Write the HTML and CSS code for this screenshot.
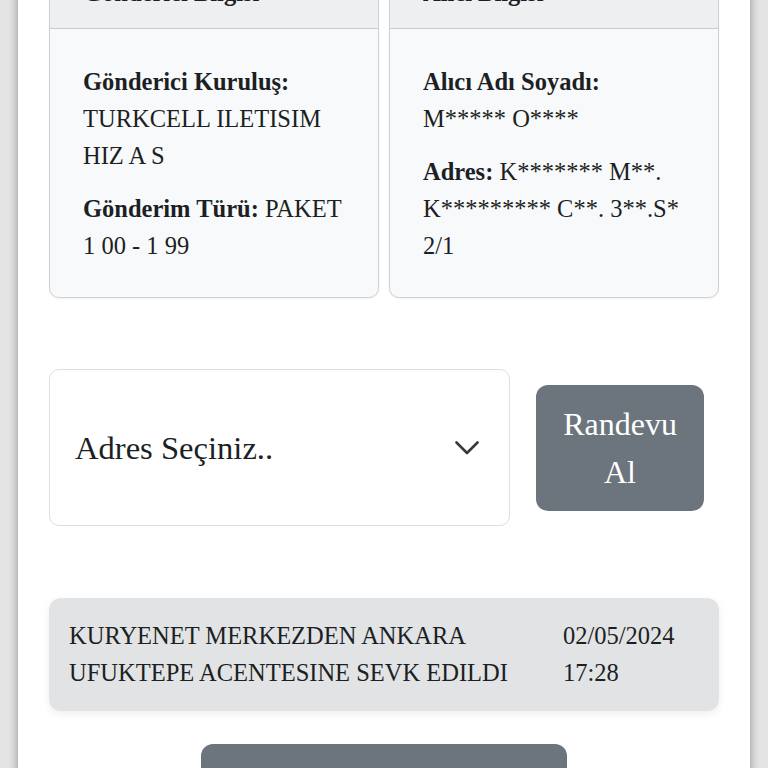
FILE: index.html
```html
<!DOCTYPE html>
<html lang="tr">
<head>
<meta charset="utf-8">
<title>Gönderi Takip</title>
<link rel="stylesheet" href="styles.css">
</head>
<body>
<main class="page">
  <section class="cards">
    <article class="card">
      <header class="card-header">Gönderici Bilgisi</header>
      <div class="card-body">
        <p><b>Gönderici Kuruluş:</b><br>TURKCELL ILETISIM HIZ A S</p>
        <p><b>Gönderim Türü:</b> PAKET 1 00 - 1 99</p>
      </div>
    </article>
    <article class="card">
      <header class="card-header">Alıcı Bilgisi</header>
      <div class="card-body">
        <p><b>Alıcı Adı Soyadı:</b><br>M***** O****</p>
        <p><b>Adres:</b> K******* M**. K********* C**. 3**.S* 2/1</p>
      </div>
    </article>
  </section>

  <section class="appointment">
    <div class="select">
      <span class="select-text">Adres Seçiniz..</span>
      <svg class="chevron" width="24" height="14" viewBox="0 0 24 14" aria-hidden="true">
        <polyline points="1.5,1.5 12,12 22.5,1.5" fill="none" stroke="#343a40" stroke-width="2.6" stroke-linecap="round" stroke-linejoin="round"/>
      </svg>
    </div>
    <button class="btn btn-appointment">Randevu Al</button>
  </section>

  <section class="timeline">
    <div class="event">
      <div class="event-text">KURYENET MERKEZDEN ANKARA UFUKTEPE ACENTESINE SEVK EDILDI</div>
      <div class="event-date">02/05/2024<br>17:28</div>
    </div>
  </section>

  <div class="bottom-actions">
    <button class="btn btn-wide"></button>
  </div>
</main>
</body>
</html>
```

FILE: styles.css
```css
html, body {
  margin: 0;
  padding: 0;
  height: 100%;
  overflow: hidden;
}

body {
  background: #e4e4e4;
  font-family: "Liberation Serif", "Times New Roman", serif;
  color: #1c1f23;
  font-size: 24.5px;
  line-height: 37px;
}

.page {
  margin: 0 18px;
  min-height: 900px;
  background: #ffffff;
  padding: 0 31px;
  box-shadow: 0 0 9px rgba(0, 0, 0, 0.38);
}

.cards {
  display: grid;
  grid-template-columns: 1fr 1fr;
  gap: 10px;
  margin-top: -43px;
}

.card {
  border: 1px solid #cfd2d5;
  border-radius: 10px;
  background: #f8f9fa;
  overflow: hidden;
  box-shadow: 0 1px 2px rgba(0, 0, 0, 0.06);
}

.card-header {
  background: #eeeff1;
  border-bottom: 1px solid #c9cbce;
  padding: 17px 33px;
  font-weight: bold;
  line-height: 36px;
}

.card-body {
  padding: 34px 33px 33px;
}

.card-body p {
  margin: 0 0 16px;
}

.card-body p:last-child {
  margin-bottom: 0;
}

.appointment {
  display: flex;
  align-items: center;
  gap: 26px;
  margin-top: 71px;
  margin-right: 15px;
}

.select {
  flex: 1;
  height: 157px;
  box-sizing: border-box;
  border: 1px solid #dcdee1;
  border-radius: 10px;
  background: #ffffff;
  display: flex;
  align-items: center;
  justify-content: space-between;
  padding: 0 30px 0 25px;
  font-size: 32.6px;
}

.select-text {
  line-height: 48px;
}

.chevron {
  display: block;
}

.btn {
  border: none;
  background: #6c757d;
  color: #ffffff;
  font-family: "Liberation Serif", "Times New Roman", serif;
  border-radius: 12px;
}

.btn-appointment {
  width: 168px;
  font-size: 32px;
  line-height: 48px;
  padding: 15px 24px;
  text-align: center;
}

.timeline {
  margin-top: 72px;
}

.event {
  display: grid;
  grid-template-columns: 494px 1fr;
  background: #e2e3e5;
  border-radius: 12px;
  padding: 19px 20px 20px;
  box-shadow: 0 3px 8px rgba(0, 0, 0, 0.07);
}

.bottom-actions {
  display: flex;
  justify-content: center;
  margin-top: 33px;
}

.btn-wide {
  width: 366px;
  height: 64px;
}
```
